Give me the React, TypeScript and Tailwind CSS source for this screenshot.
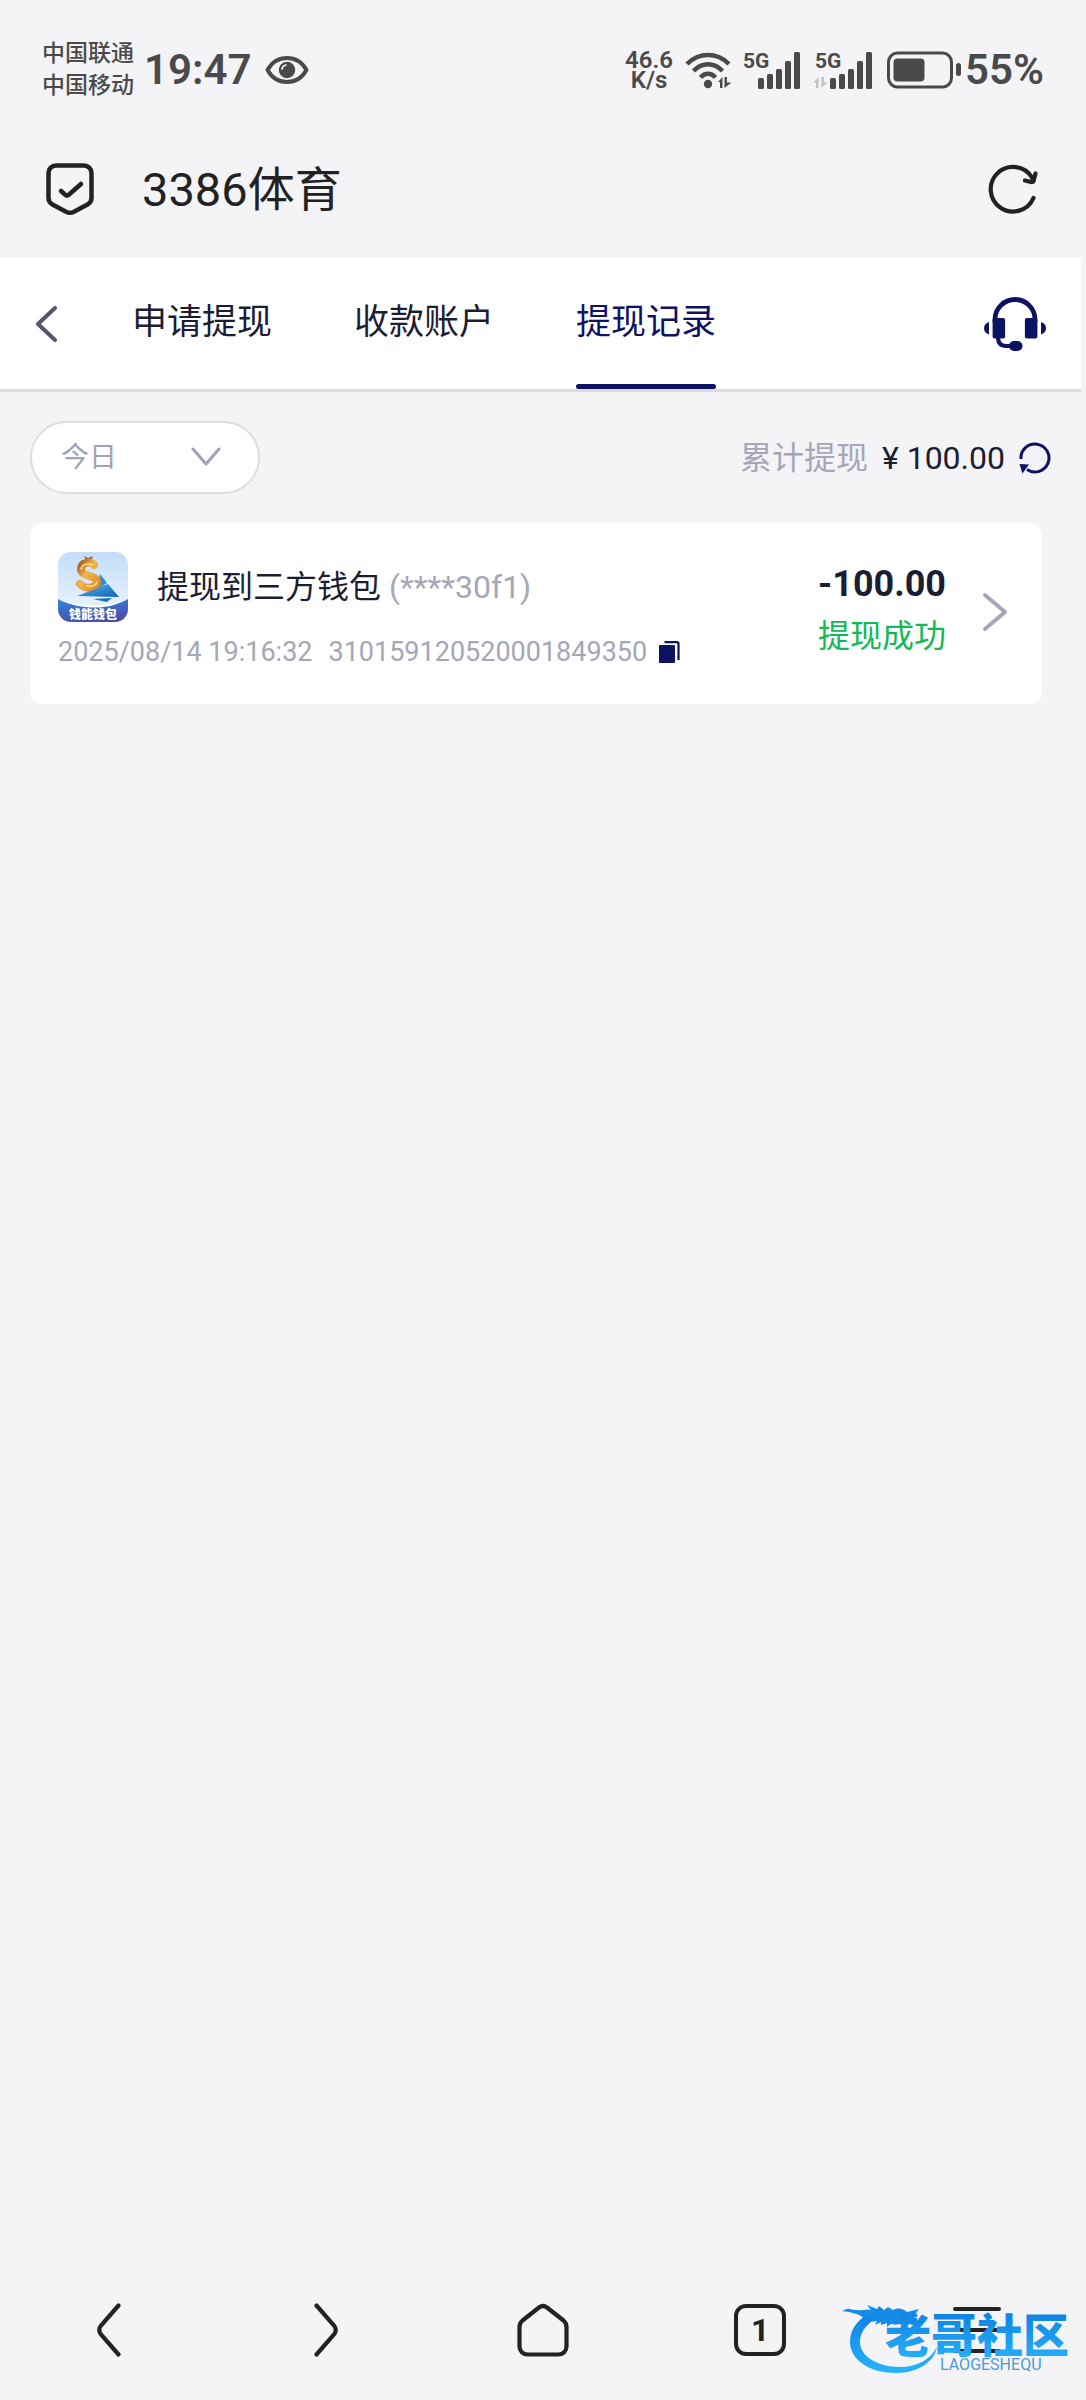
import React, { useState } from 'react';

interface IconProps {
  className?: string;
}

interface WithdrawalRecord {
  id: string;
  title: string;
  account: string;
  time: string;
  amount: string;
  status: string;
}

const tabs = ['申请提现', '收款账户', '提现记录'];

const records: WithdrawalRecord[] = [
  {
    id: '310159120520001849350',
    title: '提现到三方钱包',
    account: '(****30f1)',
    time: '2025/08/14 19:16:32',
    amount: '-100.00',
    status: '提现成功',
  },
];

/* ---------- Status bar icons ---------- */

const EyeIcon: React.FC<IconProps> = ({ className }) => (
  <svg className={className} viewBox="0 0 44 30" fill="none">
    <path d="M2.5 15C7 7 14 3 22 3s15 4 19.500 12C37 23 30 27 22 27S7 23 2.500 15z" stroke="currentColor" strokeWidth="4" strokeLinejoin="round" />
    <circle cx="22" cy="15" r="8.200" fill="currentColor" />
    <path d="M17 14a5 5 0 0 1 4-4" stroke="#f4f4f7" strokeWidth="1.600" strokeLinecap="round" />
  </svg>
);

const WifiIcon: React.FC<IconProps> = ({ className }) => (
  <svg className={className} viewBox="0 0 48 38" fill="none" stroke="currentColor" strokeWidth="4.500">
    <path d="M2 13C14 1 32 1 44 13" />
    <path d="M8.500 20C17 11 29 11 37.500 20" />
    <path d="M15.500 26.500C20 21.500 26 21.500 30.500 26.500" />
    <circle cx="23" cy="33" r="4.200" fill="currentColor" stroke="none" />
    <path d="M33 31l4.500-5v11h-2.500v-6zM39.500 26v11l7-5.500h-4.500V26z" fill="currentColor" stroke="none" />
  </svg>
);

const SignalIcon: React.FC<IconProps & { idle?: boolean }> = ({ className, idle }) => (
  <svg className={className} viewBox="0 0 60 38" fill="currentColor" overflow="visible">
    <text x="2" y="17" fontSize="21" fontWeight="700">5G</text>
    {idle && <path d="M0 31.500L5.500 26v11H3v-5.500zM8.500 26v11l6-5.500h-3.500V26z" fill="#c4c4c6" />}
    <rect x="17" y="27" width="6" height="11" rx="1.500" />
    <rect x="26" y="23" width="6" height="15" rx="1.500" />
    <rect x="35" y="18" width="6" height="20" rx="1.500" />
    <rect x="44" y="10" width="6" height="28" rx="1.500" />
    <rect x="53" y="1" width="6" height="37" rx="1.500" />
  </svg>
);

const BatteryIcon: React.FC<IconProps> = ({ className }) => (
  <svg className={className} viewBox="0 0 74 38" fill="currentColor">
    <rect x="1.500" y="2" width="63" height="34" rx="9" fill="none" stroke="currentColor" strokeWidth="3" />
    <rect x="6.500" y="7.500" width="31" height="23" rx="4" />
    <rect x="69" y="12" width="5" height="13" rx="2.500" />
  </svg>
);

/* ---------- Page icons ---------- */

const ShieldIcon: React.FC<IconProps> = ({ className }) => (
  <svg className={className} viewBox="0 0 48 52" fill="none" stroke="currentColor" strokeWidth="4.500" strokeLinecap="round" strokeLinejoin="round">
    <path d="M10 2.500h28a7.500 7.500 0 0 1 7.500 7.500v25c0 3-1.500 5-4 6.500L27.500 49q-3.500 1.500-7 0L6.500 41.500c-2.500-1.500-4-3.500-4-6.500V10A7.500 7.500 0 0 1 10 2.500z" />
    <path d="M15 28l4.500 4q1.500 1.200 3 0L35 21" />
  </svg>
);

const ReloadIcon: React.FC<IconProps> = ({ className }) => (
  <svg className={className} viewBox="0 0 50 50" fill="none" stroke="currentColor" strokeWidth="4.200" strokeLinecap="round" strokeLinejoin="round">
    <path d="M45.500 34A22.300 22.300 0 1 1 44 13.500L45.500 17" />
    <path d="M37 16.500l6 1.500q2 .2 2.600-1.500L47.500 9.500" />
  </svg>
);

const HeadsetIcon: React.FC<IconProps> = ({ className }) => (
  <svg className={className} viewBox="0 0 62 54" fill="currentColor">
    <path d="M11 25V22.500a20 20 0 0 1 40 0V25" fill="none" stroke="currentColor" strokeWidth="4.800" />
    <rect x="8.600" y="21" width="12.500" height="20.500" rx="2" />
    <rect x="40.900" y="21" width="12.500" height="20.500" rx="2" />
    <path d="M5 25v12.500C2 36.500 0 34.500 0 31.200S2 26 5 25zM57 25v12.500c3-1 5-3 5-6.300S60 26 57 25z" />
    <path d="M14 40c0 6 2.500 9 8 9h5" fill="none" stroke="currentColor" strokeWidth="4" />
    <rect x="25" y="44" width="13.500" height="10" rx="5" />
  </svg>
);

const RefreshIcon: React.FC<IconProps> = ({ className }) => (
  <svg className={className} viewBox="0 0 32 32" fill="none">
    <path d="M2 17A14 14 0 1 1 8 27.500" stroke="currentColor" strokeWidth="3" />
    <path d="M.500 22l9.500.5-6.500 9z" fill="currentColor" />
  </svg>
);

const CopyIcon: React.FC<IconProps> = ({ className }) => (
  <svg className={className} viewBox="0 0 21 22" fill="none">
    <rect x="0" y="4" width="16" height="18" rx="1" fill="currentColor" />
    <path d="M5.500 1.200H18q1.500 0 1.500 1.500V19" stroke="currentColor" strokeWidth="2.200" />
  </svg>
);

const WalletLogo: React.FC<IconProps> = ({ className }) => (
  <svg className={className} viewBox="0 0 70 70">
    <defs>
      <linearGradient id="wallet-sky" x1="0" y1="0" x2="0" y2="1">
        <stop offset="0" stopColor="#c3dcf8" />
        <stop offset="1" stopColor="#f1f8ff" />
      </linearGradient>
      <linearGradient id="wallet-wave" x1="0" y1="0" x2="0.300" y2="1">
        <stop offset="0" stopColor="#2f86dc" />
        <stop offset="1" stopColor="#4a4fae" />
      </linearGradient>
      <linearGradient id="wallet-plane" x1="0" y1="0" x2="1" y2="1">
        <stop offset="0" stopColor="#57b7ec" />
        <stop offset="1" stopColor="#1260b4" />
      </linearGradient>
      <linearGradient id="wallet-gold" x1="0" y1="0" x2="1" y2="1">
        <stop offset="0" stopColor="#a8641e" />
        <stop offset="0.400" stopColor="#f2b64d" />
        <stop offset="1" stopColor="#dd8d24" />
      </linearGradient>
      <clipPath id="wallet-clip">
        <rect width="70" height="70" rx="13" />
      </clipPath>
    </defs>
    <g clipPath="url(#wallet-clip)">
      <rect width="70" height="70" fill="url(#wallet-sky)" />
      <path d="M42 22l7 9-9 6z" fill="#2f8fd6" />
      <path d="M26 4l4 2 5-2-2 5h-5z" fill="#a9632a" />
      <path d="M36 13c-3-4-13-3-13 4 0 8 16 6 16 13 0 6-12 8-17 2" fill="none" stroke="url(#wallet-gold)" strokeWidth="8" strokeLinecap="round" />
      <path d="M23 17c1-5 7-6 11-4M39 30c-1 4-6 5-10 4" fill="none" stroke="#ffdd8b" strokeWidth="1.500" strokeLinecap="round" />
      <path d="M19 44l31-12 11 13z" fill="url(#wallet-plane)" />
      <path d="M35 47l19-1-5 4z" fill="#176fc0" />
      <path d="M0 47c16 10 54 10 70 0v23H0z" fill="url(#wallet-wave)" />
      <path d="M4 48c16 7 46 7 62 0-12 10-46 10-62 0z" fill="#fff" />
      <text x="35" y="67" textAnchor="middle" fontSize="12" fontWeight="900" fill="#fff">钱能钱包</text>
    </g>
  </svg>
);

const CommunityLogo: React.FC<IconProps> = ({ className }) => (
  <svg className={className} viewBox="0 0 224 80" overflow="visible">
    <defs>
      <linearGradient id="community-blue" x1="0" y1="0" x2="0" y2="1">
        <stop offset="0" stopColor="#0f7fe0" />
        <stop offset="1" stopColor="#27b4fb" />
      </linearGradient>
    </defs>
    <path
      d="M24 12C9 19 2 30 2 42c0 18 20 31 46 31 22 0 38-11 41-26-6 12-19 20-37 20C29 67 12 56 12 42c0-11 8-20 21-26z"
      fill="url(#community-blue)"
    />
    <path
      d="M0 8.500c6 2 13 2 20 1l3 .5-4-5 10 4 2-3 5 4 4-3 5 3c6-3 10-1 14 2l12-3-3 4 2 3-4 2 4 3-9-1 7 3-3 2-10-3-4-1-3 4-4-2-5 4v-4l-6 2v-3l-6 3 2-4-5 1 2-4-9 1c-7-6-15-7-23-8z"
      fill="#148be8"
    />
    <text x="37" y="52" fontSize="46" fontWeight="900" fill="url(#community-blue)">老哥社区</text>
    <text x="92" y="70" fontSize="16" fill="#4a9bd4">LAOGESHEQU</text>
  </svg>
);

/* ---------- Sections ---------- */

const StatusBar: React.FC = () => (
  <div className="flex h-[120px] items-center justify-between pt-5 pr-[42px] pl-[42px] text-[#4a4a4a]">
    <div className="flex items-center">
      <div className="text-[23px] leading-8 font-medium">
        <p>中国联通</p>
        <p>中国移动</p>
      </div>
      <span className="ml-2.5 text-[42px] leading-none font-semibold">19:47</span>
      <EyeIcon className="ml-3.5 h-[30px] w-11" />
    </div>
    <div className="flex items-center">
      <div className="text-center text-2xl leading-5 font-semibold">
        <p>46.6</p>
        <p>K/s</p>
      </div>
      <WifiIcon className="ml-3 h-[38px] w-12" />
      <SignalIcon className="ml-2 h-[38px] w-[60px]" />
      <SignalIcon className="ml-3 h-[38px] w-[60px]" idle />
      <BatteryIcon className="ml-3.5 h-[38px] w-[74px]" />
      <span className="ml-1 text-[42px] leading-none font-semibold">55%</span>
    </div>
  </div>
);

const BrowserBar: React.FC = () => (
  <div className="flex h-[138px] items-center pr-12 pl-[46px] text-[#222]">
    <ShieldIcon className="h-[52px] w-12" />
    <h1 className="ml-12 text-[47px] leading-none">3386体育</h1>
    <button type="button" aria-label="刷新" className="ml-auto">
      <ReloadIcon className="h-[50px] w-[50px]" />
    </button>
  </div>
);

const RecordCard: React.FC<{ record: WithdrawalRecord }> = ({ record }) => (
  <li className="flex items-center rounded-xl bg-white pt-[29px] pr-[34px] pb-8 pl-7">
    <div className="flex-1">
      <div className="flex items-center gap-[29px]">
        <WalletLogo className="h-[70px] w-[70px]" />
        <p className="text-[32px] leading-10 text-[#1b1d33]">
          {record.title} <span className="text-[#a5a7b7]">{record.account}</span>
        </p>
      </div>
      <div className="mt-2.5 flex items-center text-[27px] leading-10 text-[#a5a7b7]">
        <span>{record.time}</span>
        <span className="ml-4">{record.id}</span>
        <button type="button" aria-label="复制订单号" className="ml-3 text-[#0e1263]">
          <CopyIcon className="h-[22px] w-[21px]" />
        </button>
      </div>
    </div>
    <div className="pb-1 text-right">
      <p className="text-4xl leading-[52px] font-bold text-[#1b1d33]">{record.amount}</p>
      <p className="text-[32px] leading-[52px] text-[#12b954]">{record.status}</p>
    </div>
    <button type="button" aria-label="查看详情" className="ml-9 text-[#a5a7b7]">
      <svg className="h-10 w-[26px]" viewBox="0 0 26 40" fill="none" stroke="currentColor" strokeWidth="4" strokeLinecap="round" strokeLinejoin="round">
        <path d="M3 3l20 17L3 37" />
      </svg>
    </button>
  </li>
);

const BottomNav: React.FC = () => (
  <nav className="relative mt-auto grid h-[140px] grid-cols-5 text-[#222]">
    <button type="button" aria-label="后退" className="flex items-center justify-center">
      <svg className="h-[54px] w-6" viewBox="0 0 24 54" fill="none" stroke="currentColor" strokeWidth="4.200" strokeLinecap="round">
        <path d="M21.500 2.500L4 22.500q-3.500 4.500 0 9L21.500 51.500" />
      </svg>
    </button>
    <button type="button" aria-label="前进" className="flex items-center justify-center">
      <svg className="h-[54px] w-6" viewBox="0 0 24 54" fill="none" stroke="currentColor" strokeWidth="4.200" strokeLinecap="round">
        <path d="M2.500 2.500L20 22.500q3.500 4.500 0 9L2.500 51.500" />
      </svg>
    </button>
    <button type="button" aria-label="主页" className="flex items-center justify-center">
      <svg className="h-[54px] w-[52px]" viewBox="0 0 52 54" fill="none" stroke="currentColor" strokeWidth="4.200" strokeLinejoin="round">
        <path d="M22 4.500L5.500 17.500Q2.500 20 2.500 24v19.500a8 8 0 0 0 8 8h31a8 8 0 0 0 8-8V24q0-4-3-6.500L30 4.500q-4-3-8 0z" />
      </svg>
    </button>
    <button type="button" aria-label="标签页" className="flex items-center justify-center">
      <span className="flex h-[52px] w-[52px] items-center justify-center rounded-xl border-4 border-[#222] text-[32px] leading-none font-bold">
        1
      </span>
    </button>
    <button type="button" aria-label="菜单" className="flex flex-col items-center justify-center gap-[17px]">
      <span className="h-1 w-12 rounded-full bg-[#222]" />
      <span className="h-1 w-12 rounded-full bg-[#222]" />
      <span className="h-1 w-12 rounded-full bg-[#222]" />
    </button>
    <CommunityLogo className="pointer-events-none absolute right-3.5 bottom-5 h-20 w-56" />
  </nav>
);

const App: React.FC = () => {
  const [activeTab, setActiveTab] = useState('提现记录');

  return (
    <div className="flex min-h-screen flex-col bg-[#f4f4f7] font-[Roboto,'Noto_Sans_CJK_SC',sans-serif]">
      <StatusBar />
      <BrowserBar />

      <header className="mr-[5px] flex h-[134px] items-stretch border-b-[3px] border-[#dcdce0] bg-white pr-[35px] pl-[34px]">
        <button type="button" aria-label="返回" className="text-[#55566d]">
          <svg className="h-9 w-6" viewBox="0 0 24 36" fill="none" stroke="currentColor" strokeWidth="4" strokeLinecap="round" strokeLinejoin="round">
            <path d="M21 2L4 18l17 16" />
          </svg>
        </button>
        <nav className="ml-[74px] flex gap-[82px]">
          {tabs.map((tab) => (
            <button
              key={tab}
              type="button"
              onClick={() => setActiveTab(tab)}
              className={`flex flex-col justify-between pt-[38px] text-[35px] leading-[54px] ${
                activeTab === tab ? 'text-[#0e1263]' : 'text-[#1b1d33]'
              }`}
            >
              {tab}
              <span className={`h-[5px] w-full rounded-full ${activeTab === tab ? 'bg-[#0e1263]' : 'bg-transparent'}`} />
            </button>
          ))}
        </nav>
        <button type="button" aria-label="客服" className="ml-auto text-[#0e1263]">
          <HeadsetIcon className="h-[54px] w-[62px]" />
        </button>
      </header>

      <main>
        <div className="flex items-center justify-between py-[29px] pr-[35px] pl-[30px]">
          <div className="relative text-[#a0a3b5]">
            <select
              aria-label="日期"
              defaultValue="today"
              className="h-[73px] w-[230px] appearance-none rounded-full border-2 border-[#dcdce3] bg-white pl-[29px] text-[28px]"
            >
              <option value="today">今日</option>
              <option value="yesterday">昨日</option>
              <option value="week">近7日</option>
            </select>
            <svg className="pointer-events-none absolute top-[26px] right-[39px] h-5 w-[30px]" viewBox="0 0 30 20" fill="none" stroke="currentColor" strokeWidth="3" strokeLinecap="round" strokeLinejoin="round">
              <path d="M2 2l13 15L28 2" />
            </svg>
          </div>
          <div className="flex items-center text-[32px] leading-10">
            <span className="text-[#a5a7b7]">累计提现</span>
            <span className="ml-3.5 text-[#1b1d33]">¥ 100.00</span>
            <button type="button" aria-label="刷新金额" className="ml-3.5 text-[#0e1263]">
              <RefreshIcon className="h-8 w-8" />
            </button>
          </div>
        </div>

        <ul className="mr-11 ml-[30px] flex flex-col gap-4">
          {records.map((record) => (
            <RecordCard key={record.id} record={record} />
          ))}
        </ul>
      </main>

      <BottomNav />
    </div>
  );
};

export default App;
